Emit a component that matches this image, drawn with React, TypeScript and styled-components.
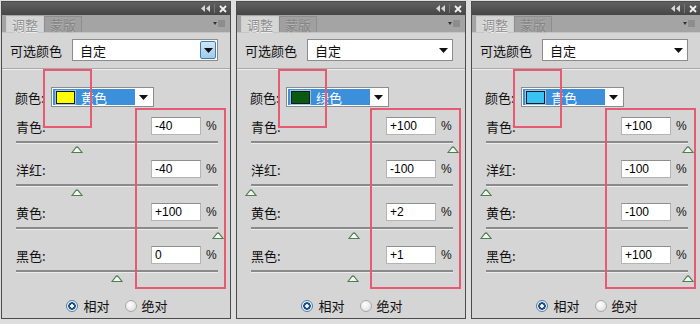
import styled, { createGlobalStyle } from 'styled-components';

interface Ajuste {
  nome: string;
  valor: number;
}

interface Painel {
  cor: string;
  nomeCor: string;
  focado: boolean;
  ajustes: Ajuste[];
}

const paineis: Painel[] = [
  {
    cor: '#ffff00',
    nomeCor: '黄色',
    focado: true,
    ajustes: [
      { nome: '青色:', valor: -40 },
      { nome: '洋红:', valor: -40 },
      { nome: '黄色:', valor: 100 },
      { nome: '黑色:', valor: 0 },
    ],
  },
  {
    cor: '#0b5a12',
    nomeCor: '绿色',
    focado: false,
    ajustes: [
      { nome: '青色:', valor: 100 },
      { nome: '洋红:', valor: -100 },
      { nome: '黄色:', valor: 2 },
      { nome: '黑色:', valor: 1 },
    ],
  },
  {
    cor: '#38c4f2',
    nomeCor: '青色',
    focado: false,
    ajustes: [
      { nome: '青色:', valor: 100 },
      { nome: '洋红:', valor: -100 },
      { nome: '黄色:', valor: -100 },
      { nome: '黑色:', valor: 100 },
    ],
  },
];

const Global = createGlobalStyle`
  body { margin: 0; background: #dedede; font-family: "Noto Sans CJK SC", "Liberation Sans", sans-serif; }
`;

const Pagina = styled.div`
  display: flex; gap: 5px; padding: 1px 0 0 1px; height: 324px; box-sizing: border-box; overflow: hidden;
`;
const Caixa = styled.div`
  position: relative; flex-shrink: 0; width: 230px; height: 318px; box-sizing: border-box;
  border: 1px solid #4b4b4b; background: #d5d5d5; display: flex; flex-direction: column;
`;
const BarraTitulo = styled.div`
  height: 13px; background: linear-gradient(#606060, #464646); display: flex; align-items: center;
  justify-content: flex-end; gap: 4px; padding-right: 3px;
`;
const Divisor = styled.span` width: 1px; height: 9px; background: #777; `;
const Abas = styled.div`
  height: 17px; background: #a4a4a4; border-bottom: 1px solid #c4c4c4; display: flex; align-items: flex-end;
  padding: 0 5px 0 4px;
`;
const Aba = styled.div<{ $ativa: boolean }>`
  height: 16px; padding: 0 5px; font-size: 13px; line-height: 16px; box-sizing: border-box;
  border: 1px solid ${(p) => (p.$ativa ? '#cfcfcf' : '#8e8e8e')}; border-bottom: none;
  background: ${(p) => (p.$ativa ? '#d5d5d5' : '#a0a0a0')};
  color: ${(p) => (p.$ativa ? '#8f8f8f' : '#858585')};
  text-shadow: 0 1px 0 ${(p) => (p.$ativa ? '#f4f4f4' : '#b8b8b8')};
`;
const Menu = styled.div` margin-left: auto; align-self: center; display: flex; `;
const Corpo = styled.div`
  flex: 1; display: flex; flex-direction: column; padding: 0 12px 0 8px;
`;
const LinhaPreset = styled.div` margin-top: 6px; height: 22px; display: flex; align-items: center; `;
const Rotulo = styled.span<{ $largura: number }>`
  width: ${(p) => p.$largura}px; font-size: 13px; color: #111; flex-shrink: 0;
`;
const Selecao = styled.div`
  width: 152px; height: 22px; box-sizing: border-box; border: 1px solid #8c8c8c; background: #fff;
  display: flex; align-items: center; padding: 0 1px 0 7px; font-size: 13px; color: #111;
`;
const BotaoSeta = styled.div<{ $focado: boolean }>`
  margin-left: auto; width: 16px; height: 18px; box-sizing: border-box; display: flex; align-items: center;
  justify-content: center; border-radius: 2px;
  border: 1px solid ${(p) => (p.$focado ? '#3f7fb4' : 'transparent')};
  background: ${(p) => (p.$focado ? 'linear-gradient(#cfe6f8, #9fcbee)' : 'transparent')};
`;
const Separador = styled.div`
  margin: 7px -12px 0 -8px; border-top: 1px solid #a8a8a8; border-bottom: 1px solid #ededed;
`;
const LinhaCor = styled.div` margin-top: 17px; padding-left: 5px; height: 20px; display: flex; align-items: center; `;
const CampoCor = styled.div`
  width: 103px; height: 20px; box-sizing: border-box; border: 1px solid #8c8c8c; background: #fff;
  display: flex; align-items: center; padding: 1px;
`;
const Destaque = styled.div`
  width: 82px; height: 16px; background: #3c8fdb; display: flex; align-items: center; gap: 6px; padding-left: 3px;
  color: #fff; font-size: 13px; box-sizing: border-box;
`;
const Amostra = styled.span<{ $cor: string }>`
  width: 17px; height: 11px; background: ${(p) => p.$cor}; border: 1px solid #1a1a1a; box-shadow: 0 0 0 1px #9ac4ea;
`;
const SetaCor = styled.div` flex: 1; display: flex; justify-content: center; `;
const Grupo = styled.div<{ $primeiro: boolean }>` margin-top: ${(p) => (p.$primeiro ? 10 : 0)}px; `;
const LinhaAjuste = styled.div` height: 18px; display: flex; align-items: center; padding-left: 6px; `;
const Entrada = styled.div`
  margin-left: auto; width: 50px; height: 18px; box-sizing: border-box; background: #fff;
  border: 1px solid #b4b4b4; border-top-color: #8e8e8e; padding-left: 3px;
  font-family: "Liberation Sans", Arial, sans-serif; font-size: 12px; line-height: 16px; color: #000;
`;
const Porcento = styled.span`
  width: 12px; margin-left: 5px; font-family: "Liberation Sans", Arial, sans-serif; font-size: 12px; color: #111;
`;
const Trilho = styled.div`
  position: relative; margin: 6px 0 0 6px; height: 19px; border-top: 2px solid #8a8a8a; box-sizing: border-box;
  &::after { content: ''; position: absolute; left: 0; right: 0; top: 0; border-top: 1px solid #ececec; }
`;
const Cursor = styled.svg`
  position: absolute; top: 3px; margin-left: -6px;
`;
const LinhaRadio = styled.div`
  margin-top: 7px; display: flex; justify-content: center; align-items: center; gap: 5px; padding-left: 6px;
  font-size: 13px; color: #111;
`;
const Radio = styled.span<{ $marcado: boolean }>`
  width: 12px; height: 12px; border-radius: 50%; box-sizing: border-box; flex-shrink: 0;
  border: 1px solid ${(p) => (p.$marcado ? '#5a7da0' : '#a8a8a8')};
  background: ${(p) =>
    p.$marcado
      ? 'radial-gradient(circle, #fff 0 1.5px, #1d4f86 2px 3.5px, #e8f2fb 4px)'
      : 'radial-gradient(circle at 40% 35%, #fff, #d8d8d8)'};
`;
const OpcaoTexto = styled.span<{ $extra: number }>` margin-right: ${(p) => p.$extra}px; `;
const Marca = styled.div<{ $x: number; $y: number; $w: number; $h: number }>`
  position: absolute; left: ${(p) => p.$x}px; top: ${(p) => p.$y}px; width: ${(p) => p.$w}px; height: ${(p) => p.$h}px;
  border: 2px solid #e65a74; box-sizing: border-box; pointer-events: none;
`;

function SetaBaixo() {
  return (
    <svg width="9" height="5" viewBox="0 0 9 5">
      <path d="M0 0H9L4.5 5Z" fill="#111" />
    </svg>
  );
}

function PainelCor({ painel }: { painel: Painel }) {
  return (
    <Caixa>
      <BarraTitulo>
        <svg width="9" height="7" viewBox="0 0 9 7">
          <path d="M4 0V7L0 3.5Z M9 0V7L5 3.5Z" fill="#d8d8d8" />
        </svg>
        <Divisor />
        <svg width="8" height="8" viewBox="0 0 8 8">
          <path d="M1 1L7 7M7 1L1 7" stroke="#f2f2f2" strokeWidth="1.8" />
        </svg>
      </BarraTitulo>
      <Abas>
        <Aba $ativa>调整</Aba>
        <Aba $ativa={false}>蒙版</Aba>
        <Menu>
          <svg width="12" height="8" viewBox="0 0 12 8">
            <path d="M0 2H4L2 5Z" fill="#333" />
            <path d="M5 0H12M5 2H12M5 4H12M5 6H12" stroke="#777" strokeWidth="1" />
          </svg>
        </Menu>
      </Abas>
      <Corpo>
        <LinhaPreset>
          <Rotulo $largura={62}>可选颜色</Rotulo>
          <Selecao>
            自定
            <BotaoSeta $focado={painel.focado}>
              <SetaBaixo />
            </BotaoSeta>
          </Selecao>
        </LinhaPreset>
        <Separador />
        <LinhaCor>
          <Rotulo $largura={36}>颜色:</Rotulo>
          <CampoCor>
            <Destaque>
              <Amostra $cor={painel.cor} />
              {painel.nomeCor}
            </Destaque>
            <SetaCor>
              <SetaBaixo />
            </SetaCor>
          </CampoCor>
        </LinhaCor>
        {painel.ajustes.map((a, i) => (
          <Grupo key={a.nome} $primeiro={i === 0}>
            <LinhaAjuste>
              <Rotulo $largura={40}>{a.nome}</Rotulo>
              <Entrada>{a.valor > 0 ? `+${a.valor}` : a.valor}</Entrada>
              <Porcento>%</Porcento>
            </LinhaAjuste>
            <Trilho>
              <Cursor width="12" height="7" viewBox="0 0 12 7" style={{ left: `${(a.valor + 100) / 2}%` }}>
                <path d="M1 6.5L5 1.5Q6 0.5 7 1.5L11 6.5Z" fill="#f4f8f2" stroke="#4f7f50" strokeWidth="1.2" />
              </Cursor>
            </Trilho>
          </Grupo>
        ))}
        <LinhaRadio>
          <Radio $marcado />
          <OpcaoTexto $extra={10}>相对</OpcaoTexto>
          <Radio $marcado={false} />
          <OpcaoTexto $extra={0}>绝对</OpcaoTexto>
        </LinhaRadio>
      </Corpo>
      <Marca $x={41} $y={67} $w={49} $h={59} />
      <Marca $x={133} $y={106} $w={91} $h={181} />
    </Caixa>
  );
}

export default function App() {
  return (
    <>
      <Global />
      <Pagina>
        {paineis.map((p) => (
          <PainelCor key={p.nomeCor} painel={p} />
        ))}
      </Pagina>
    </>
  );
}
